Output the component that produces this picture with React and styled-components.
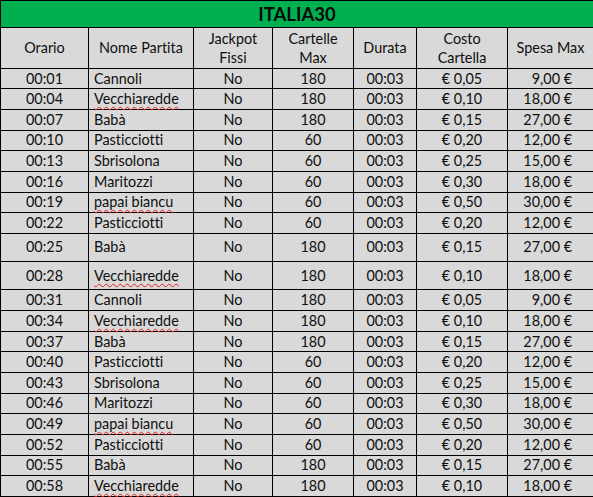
import React from 'react';
import styled, { createGlobalStyle } from 'styled-components';

const GlobalStyle = createGlobalStyle`
    html, body {
        margin: 0;
        padding: 0;
        background: #ffffff;
    }
`;

const columns = [
    { key: 'orario', label: 'Orario', width: 88 },
    { key: 'nome', label: 'Nome Partita', width: 105 },
    { key: 'jackpot', label: ['Jackpot', 'Fissi'], width: 79 },
    { key: 'cartelle', label: ['Cartelle', 'Max'], width: 81 },
    { key: 'durata', label: 'Durata', width: 63 },
    { key: 'costo', label: ['Costo', 'Cartella'], width: 91 },
    { key: 'spesa', label: 'Spesa Max', width: 86 },
];

const misspelled = ['Vecchiaredde', 'papai biancu'];

const giochi = [
    ['00:01', 'Cannoli', '180', '0,05', '9,00'],
    ['00:04', 'Vecchiaredde', '180', '0,10', '18,00'],
    ['00:07', 'Babà', '180', '0,15', '27,00'],
    ['00:10', 'Pasticciotti', '60', '0,20', '12,00'],
    ['00:13', 'Sbrisolona', '60', '0,25', '15,00'],
    ['00:16', 'Maritozzi', '60', '0,30', '18,00'],
    ['00:19', 'papai biancu', '60', '0,50', '30,00'],
    ['00:22', 'Pasticciotti', '60', '0,20', '12,00'],
    ['00:25', 'Babà', '180', '0,15', '27,00', true],
    ['00:28', 'Vecchiaredde', '180', '0,10', '18,00', true],
    ['00:31', 'Cannoli', '180', '0,05', '9,00'],
    ['00:34', 'Vecchiaredde', '180', '0,10', '18,00'],
    ['00:37', 'Babà', '180', '0,15', '27,00'],
    ['00:40', 'Pasticciotti', '60', '0,20', '12,00'],
    ['00:43', 'Sbrisolona', '60', '0,25', '15,00'],
    ['00:46', 'Maritozzi', '60', '0,30', '18,00'],
    ['00:49', 'papai biancu', '60', '0,50', '30,00'],
    ['00:52', 'Pasticciotti', '60', '0,20', '12,00'],
    ['00:55', 'Babà', '180', '0,15', '27,00'],
    ['00:58', 'Vecchiaredde', '180', '0,10', '18,00'],
];

const App = () => {
    return (
        <>
            <GlobalStyle />
            <Sheet>
                <colgroup>
                    {columns.map((c) => (
                        <col key={c.key} style={{ width: c.width }} />
                    ))}
                </colgroup>
                <thead>
                    <TitleRow>
                        <TitleCell colSpan={columns.length}>ITALIA30</TitleCell>
                    </TitleRow>
                    <HeaderRow>
                        {columns.map((c) => (
                            <HeaderCell key={c.key}>
                                {Array.isArray(c.label)
                                    ? c.label.map((l, i) => <Line key={i}>{l}</Line>)
                                    : c.label}
                            </HeaderCell>
                        ))}
                    </HeaderRow>
                </thead>
                <tbody>
                    {giochi.map(([orario, nome, cartelle, costo, spesa, tall], i) => (
                        <Row key={i} $tall={tall}>
                            <Cell $align="center">{orario}</Cell>
                            <Cell $align="left">
                                {misspelled.includes(nome) ? <Squiggle>{nome}</Squiggle> : nome}
                            </Cell>
                            <Cell $align="center">No</Cell>
                            <Cell $align="center">{cartelle}</Cell>
                            <Cell $align="center">00:03</Cell>
                            <Cell $align="center">€ {costo}</Cell>
                            <Cell $align="right">{spesa} €</Cell>
                        </Row>
                    ))}
                </tbody>
            </Sheet>
        </>
    );
};

const Sheet = styled.table`
    width: 593px;
    table-layout: fixed;
    border-collapse: collapse;
    font-family: Lato, "Open Sans", sans-serif;
    font-size: 14.4px;
    font-variant-ligatures: none;
    color: #0f0f0f;
    background: #d9d9d9;

    td, th {
        border: 1px solid #000000;
        padding: 0;
    }
`;

const TitleRow = styled.tr`
    height: 27px;
`;

const TitleCell = styled.th`
    background: #00b050;
    font-size: 18.5px;
    font-weight: 700;
    color: #0a0a0a;
    text-align: center;
    vertical-align: middle;
`;

const HeaderRow = styled.tr`
    height: 40.7px;
`;

const HeaderCell = styled.th`
    font-weight: 400;
    text-align: center;
    vertical-align: middle;
    line-height: 19px;
`;

const Line = styled.div`
    display: block;
`;

const Row = styled.tr`
    height: ${(p) => (p.$tall ? '28.3px' : '20.65px')};
`;

const Cell = styled.td`
    text-align: ${(p) => p.$align};
    vertical-align: middle;
    line-height: 16px;
    white-space: nowrap;
    padding-left: ${(p) => (p.$align === 'left' ? '5px' : '0')} !important;
    padding-right: ${(p) => (p.$align === 'right' ? '21px' : '0')} !important;
`;

const Squiggle = styled.span`
    text-decoration: underline wavy #e02020;
    text-decoration-thickness: 1px;
    text-underline-offset: 2px;
`;

export default App;
